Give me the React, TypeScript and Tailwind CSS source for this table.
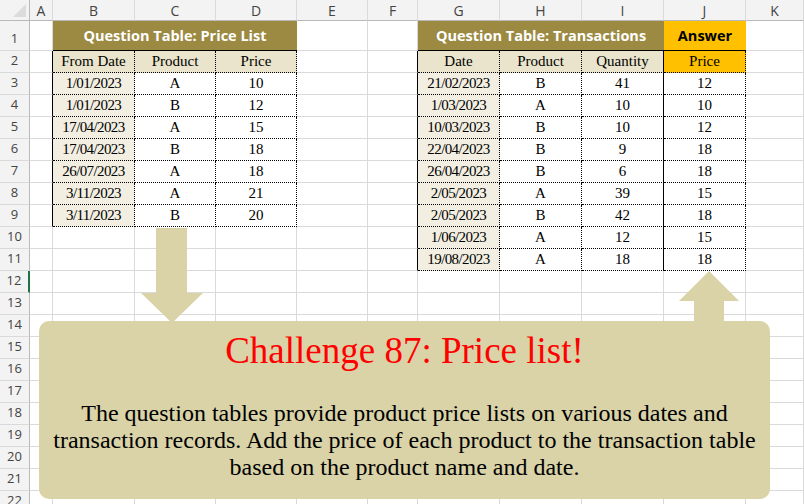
import React from "react";

const letters = ["A", "B", "C", "D", "E", "F", "G", "H", "I", "J", "K"];

const priceList = [
  ["1/01/2023", "A", "10"],
  ["1/01/2023", "B", "12"],
  ["17/04/2023", "A", "15"],
  ["17/04/2023", "B", "18"],
  ["26/07/2023", "A", "18"],
  ["3/11/2023", "A", "21"],
  ["3/11/2023", "B", "20"],
];

const transactions = [
  ["21/02/2023", "B", "41", "12"],
  ["1/03/2023", "A", "10", "10"],
  ["10/03/2023", "B", "10", "12"],
  ["22/04/2023", "B", "9", "18"],
  ["26/04/2023", "B", "6", "18"],
  ["2/05/2023", "A", "39", "15"],
  ["2/05/2023", "B", "42", "18"],
  ["1/06/2023", "A", "12", "15"],
  ["19/08/2023", "A", "18", "18"],
];

const gridCell = "border-r border-b border-[#dadada] bg-white";
const tableCell =
  "border-r border-b border-black border-dotted flex items-center justify-center text-[15px] text-black font-[Liberation_Serif,serif]";
const sans = "font-[Open_Sans,sans-serif]";

const RowHeader = ({ n }: { n: number }) => (
  <div
    className={
      "flex items-end justify-center pb-[2px] bg-[#f3f3f3] border-b border-b-[#dadada] text-[13px] text-[#444] font-[Open_Sans,sans-serif] " +
      (n === 12
        ? "border-r-2 border-r-[#217346]"
        : "border-r border-r-[#b9b9b9]")
    }
  >
    {n}
  </div>
);

const App = () => {
  const rows: React.ReactNode[] = [];

  // column headers
  rows.push(
    <div
      key="corner"
      className="bg-[#f3f3f3] border-r border-b border-[#b9b9b9] flex items-end justify-end pr-[3px] pb-[3px]"
    >
      <svg width="13" height="13" viewBox="0 0 13 13">
        <polygon points="13,0 13,13 0,13" fill="#dcdcdc" />
      </svg>
    </div>
  );
  letters.forEach((l) =>
    rows.push(
      <div
        key={"h" + l}
        className="bg-[#f3f3f3] border-r border-r-[#dadada] border-b border-b-[#b9b9b9] flex items-center justify-center text-[14px] text-[#444] font-[Open_Sans,sans-serif]"
      >
        {l}
      </div>
    )
  );

  // row 1: titles
  rows.push(<RowHeader key="r1" n={1} />);
  rows.push(<div key="a1" className={gridCell} />);
  rows.push(
    <div
      key="b1"
      className={
        "col-span-3 bg-[#9c8a42] border-b border-b-black flex items-center justify-center text-white font-bold text-[14.5px] " +
        sans
      }
    >
      Question Table: Price List
    </div>
  );
  rows.push(<div key="e1" className={gridCell} />);
  rows.push(<div key="f1" className={gridCell} />);
  rows.push(
    <div
      key="g1"
      className={
        "col-span-3 bg-[#9c8a42] border-b border-b-black flex items-center justify-center text-white font-bold text-[14.5px] " +
        sans
      }
    >
      Question Table: Transactions
    </div>
  );
  rows.push(
    <div
      key="j1"
      className={
        "bg-[#ffc000] border-b border-b-black flex items-center justify-center text-black font-bold text-[14.5px] " +
        sans
      }
    >
      Answer
    </div>
  );
  rows.push(<div key="k1" className={gridCell} />);

  for (let r = 2; r <= 22; r++) {
    const inT1 = r >= 2 && r <= 9;
    const inT2 = r >= 2 && r <= 11;
    const head = r === 2;
    rows.push(<RowHeader key={"r" + r} n={r} />);

    // A
    rows.push(
      <div
        key={"a" + r}
        className={
          inT1
            ? "bg-white border-b border-b-[#dadada] border-r border-r-black"
            : gridCell
        }
      />
    );

    // B C D
    if (inT1) {
      const vals = head
        ? ["From Date", "Product", "Price"]
        : priceList[r - 3];
      vals.forEach((v, i) =>
        rows.push(
          <div
            key={"t1" + r + i}
            className={
              tableCell +
              " " +
              (head
                ? "bg-[#e9e4cb]"
                : i === 0
                ? "bg-[#f2efe2] tracking-[-0.6px]"
                : "bg-white")
            }
          >
            {v}
          </div>
        )
      );
    } else {
      ["b", "c", "d"].forEach((c) =>
        rows.push(<div key={c + r} className={gridCell} />)
      );
    }

    // E F
    rows.push(<div key={"e" + r} className={gridCell} />);
    rows.push(
      <div
        key={"f" + r}
        className={
          inT2
            ? "bg-white border-b border-b-[#dadada] border-r border-r-black"
            : gridCell
        }
      />
    );

    // G H I J
    if (inT2) {
      const vals = head
        ? ["Date", "Product", "Quantity", "Price"]
        : transactions[r - 3];
      vals.forEach((v, i) => {
        let bg = "bg-white";
        if (head) bg = i === 3 ? "bg-[#ffc000]" : "bg-[#e9e4cb]";
        else if (i === 0) bg = "bg-[#f2efe2] tracking-[-0.6px]";
        rows.push(
          <div
            key={"t2" + r + i}
            className={
              tableCell +
              " " +
              bg +
              (i === 2 ? " [border-right-style:solid]" : "")
            }
          >
            {v}
          </div>
        );
      });
    } else {
      ["g", "h", "i", "j"].forEach((c) =>
        rows.push(<div key={c + r} className={gridCell} />)
      );
    }

    // K
    rows.push(<div key={"k" + r} className={gridCell} />);
  }

  return (
    <div className="relative w-[804px] h-[504px] overflow-hidden bg-white">
      <div className="grid grid-cols-[30px_23px_82px_81px_81px_71px_50px_82px_82px_82px_82px_1fr] grid-rows-[21px_30px_repeat(21,22px)]">
        {rows}
      </div>

      {/* arrows */}
      <svg
        className="absolute left-0 top-0 pointer-events-none"
        width="804"
        height="504"
        viewBox="0 0 804 504"
      >
        <polygon
          points="156,228 187,228 187,293 203,293 172,323 141,293 156,293"
          fill="#d9d3a7"
        />
        <polygon
          points="709,271 739,301 724,301 724,323 694,323 694,301 679,301"
          fill="#d9d3a7"
        />
      </svg>

      {/* callout */}
      <div className="absolute left-[39px] top-[321px] w-[731px] h-[178px] rounded-[10px] bg-[#d9d3a7] flex flex-col items-center pt-[8px] font-[Liberation_Serif,serif]">
        <div className="text-[37px] leading-[44px] text-[#ff0000]">
          Challenge 87: Price list!
        </div>
        <div className="mt-[27px] text-[24px] leading-[27px] text-black text-center whitespace-nowrap">
          The question tables provide product price lists on various dates and
          <br />
          transaction records. Add the price of each product to the transaction
          table
          <br />
          based on the product name and date.
        </div>
      </div>
    </div>
  );
};

export default App;
